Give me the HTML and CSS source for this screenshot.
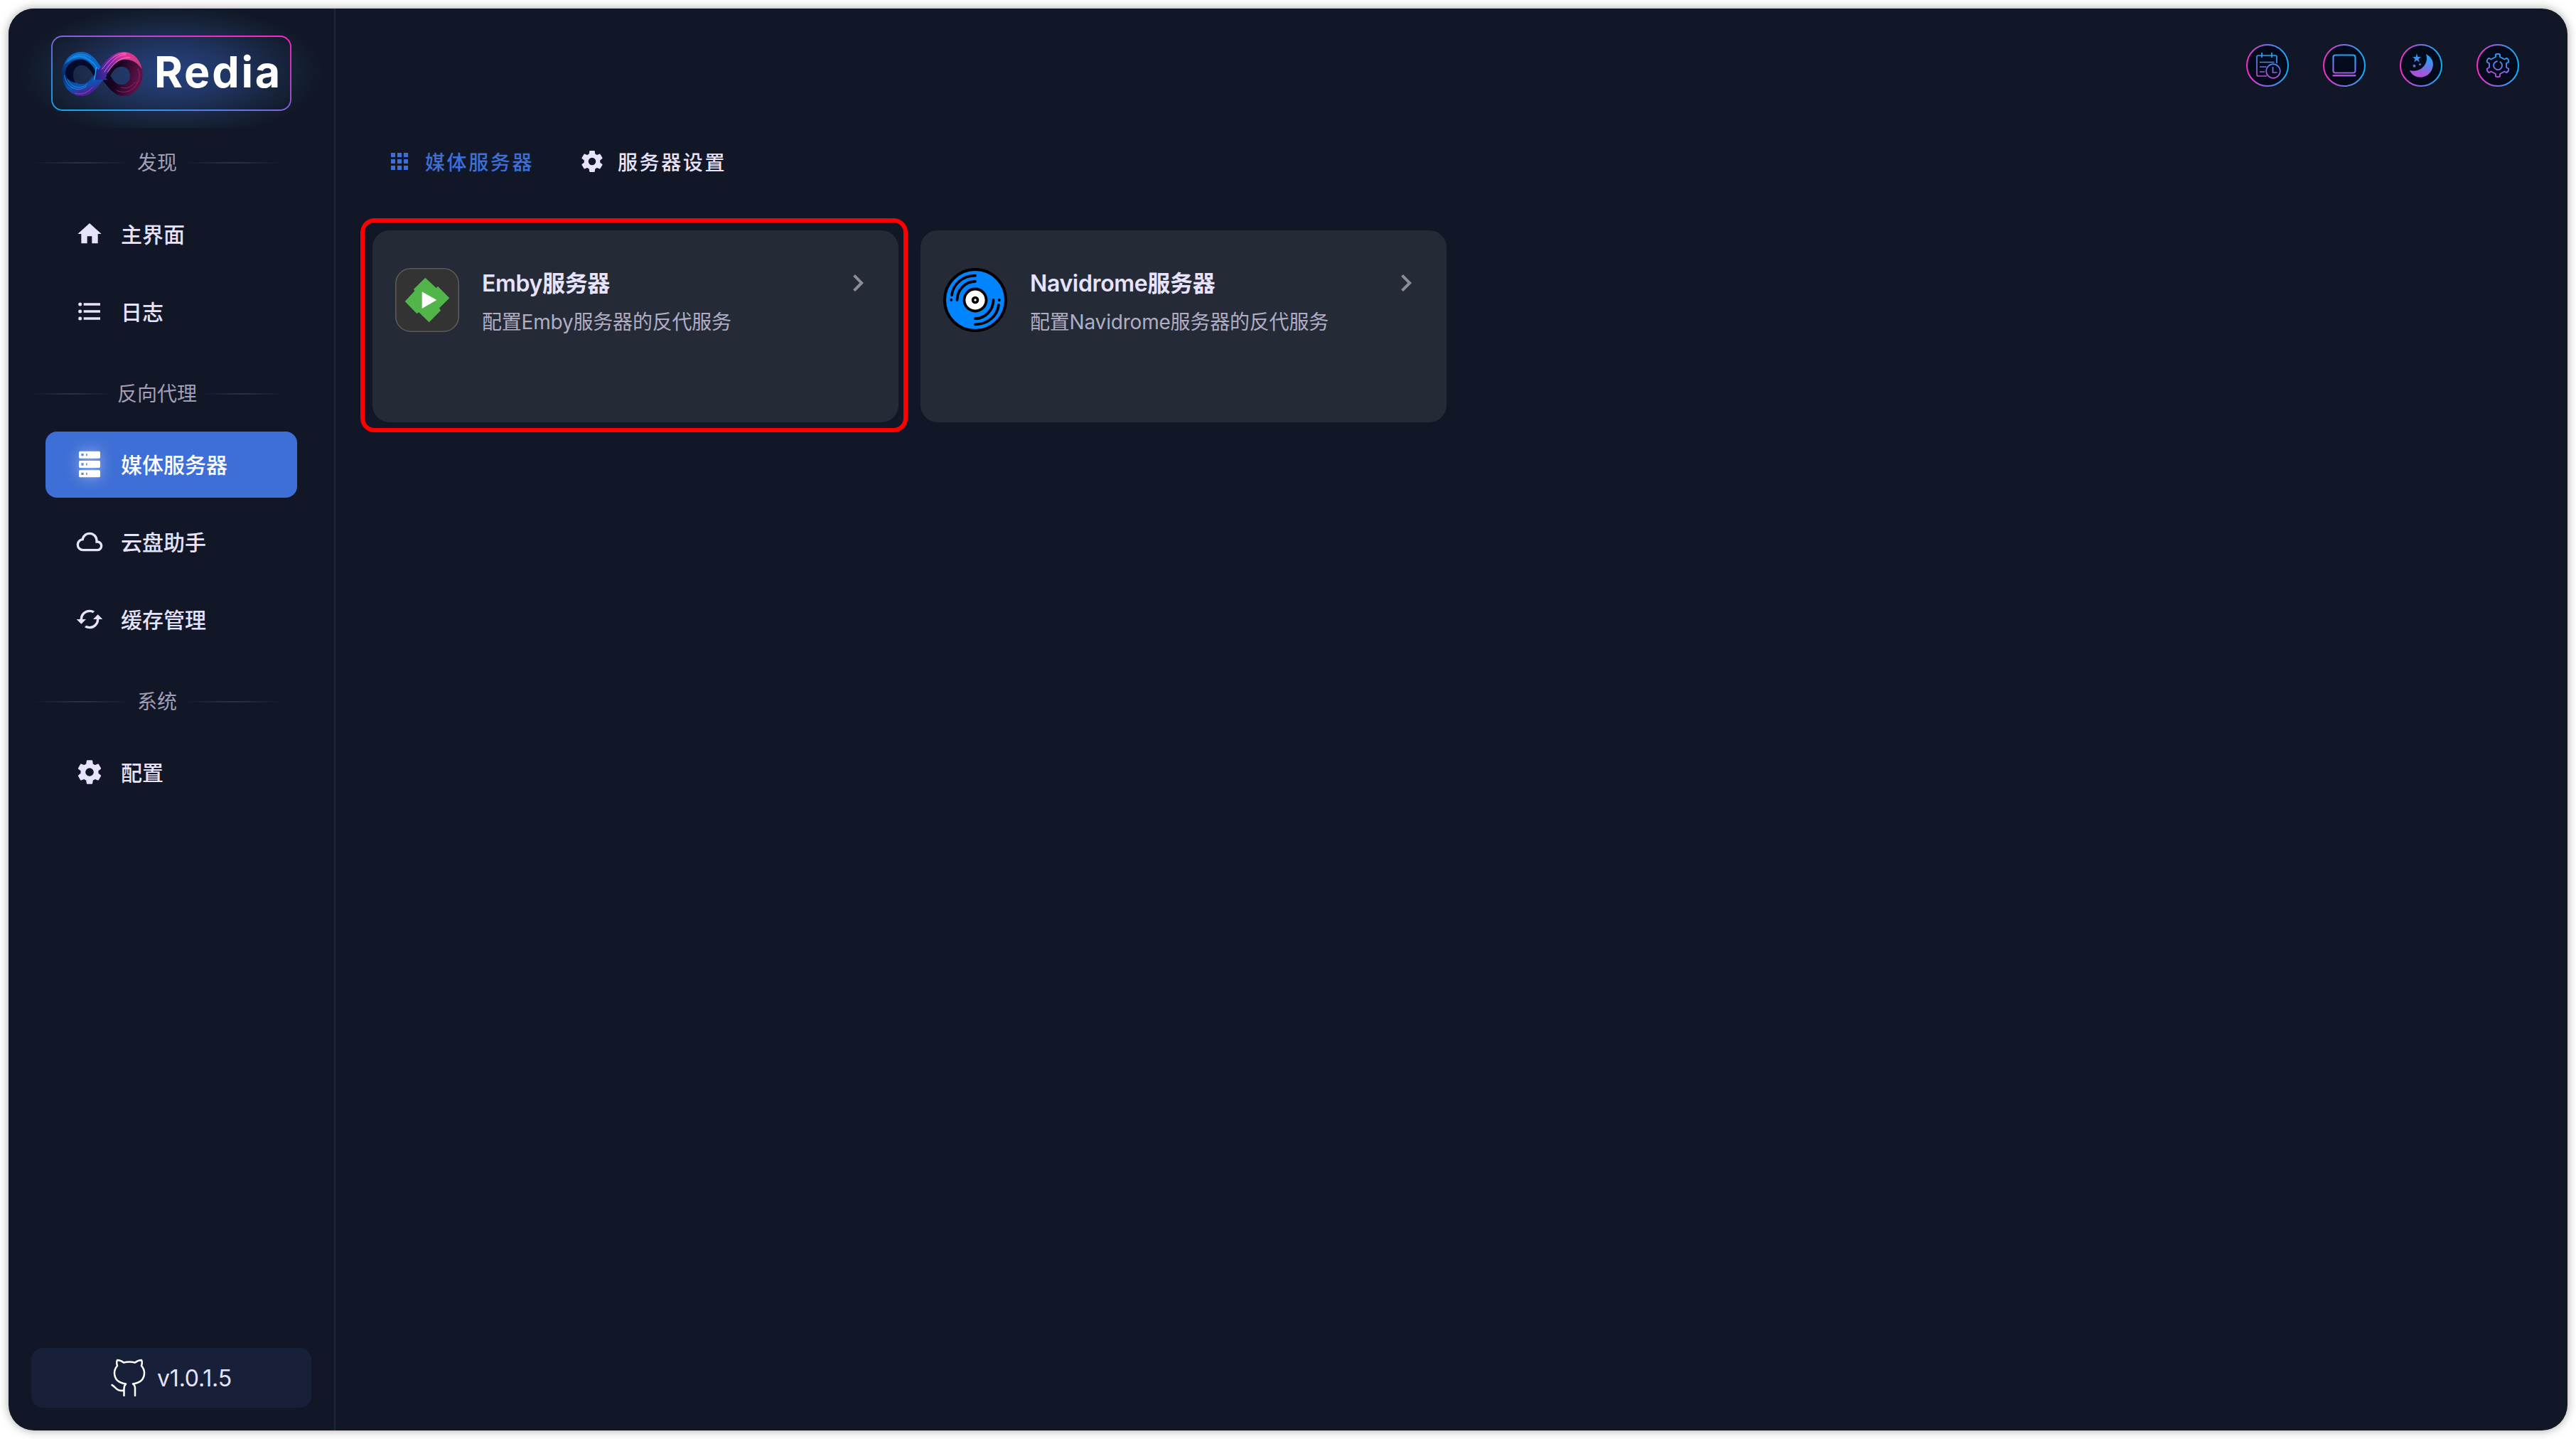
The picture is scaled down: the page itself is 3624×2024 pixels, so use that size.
FILE: index.html
```html
<!DOCTYPE html>
<html lang="zh-CN">
<head>
  <meta charset="UTF-8" />
  <meta name="viewport" content="width=device-width, initial-scale=1.0"/>
  <title>Redia</title>
  <link rel="stylesheet" href="styles.css">
</head>
<body>
  <!-- shared gradients and icons -->
  <svg class="defs" width="0" height="0">
    <defs>
      <linearGradient id="ring" x1="0" y1="0" x2="1" y2="0">
        <stop offset="0" stop-color="#ff2bc8"/>
        <stop offset="0.5" stop-color="#7f6fe6"/>
        <stop offset="1" stop-color="#0fb0fa"/>
      </linearGradient>
      <linearGradient id="glyph" gradientUnits="userSpaceOnUse" x1="32" y1="12" x2="24" y2="50">
        <stop offset="0" stop-color="#10aff8"/>
        <stop offset="0.5" stop-color="#6b74e6"/>
        <stop offset="1" stop-color="#d63ccf"/>
      </linearGradient>
      <linearGradient id="frame" x1="0" y1="1" x2="1" y2="0">
        <stop offset="0.1" stop-color="#18a5f0"/>
        <stop offset="0.5" stop-color="#7d66de"/>
        <stop offset="0.85" stop-color="#f72bc6"/>
      </linearGradient>
      <linearGradient id="loopBlue" x1="0" y1="0" x2="0.3" y2="1">
        <stop offset="0" stop-color="#0a5cb8"/>
        <stop offset="0.5" stop-color="#062a6c"/>
        <stop offset="0.8" stop-color="#0a56b4"/>
        <stop offset="1" stop-color="#4a2194"/>
      </linearGradient>
      <linearGradient id="loopPink" x1="0" y1="0.4" x2="1" y2="0.3">
        <stop offset="0" stop-color="#1a2a90"/>
        <stop offset="0.35" stop-color="#7c22a8"/>
        <stop offset="0.65" stop-color="#e8349a"/>
        <stop offset="1" stop-color="#c0407c"/>
      </linearGradient>
      <linearGradient id="loopDark" x1="0" y1="0" x2="1" y2="0.3">
        <stop offset="0" stop-color="#050a2c"/>
        <stop offset="0.5" stop-color="#16041f"/>
        <stop offset="1" stop-color="#5e1248"/>
      </linearGradient>
      <symbol id="icon-cog" viewBox="0 0 24 24">
        <path d="M12 15.5A3.5 3.5 0 0 1 8.5 12 3.5 3.5 0 0 1 12 8.500a3.500 3.500 0 0 1 3.500 3.500 3.500 3.500 0 0 1-3.500 3.500m7.430-2.530c.040-.320.070-.640.070-.970s-.030-.660-.070-1l2.110-1.630c.190-.150.240-.420.120-.640l-2-3.460c-.120-.220-.390-.310-.610-.220l-2.490 1c-.520-.390-1.060-.730-1.690-.980l-.370-2.650A.506.506 0 0 0 14 2h-4c-.250 0-.460.180-.500.420l-.370 2.650c-.630.250-1.170.590-1.690.980l-2.490-1c-.220-.090-.490 0-.610.220l-2 3.460c-.130.220-.070.490.120.640L4.570 11c-.040.340-.070.670-.070 1s.030.650.070.970l-2.110 1.660c-.190.150-.250.420-.120.640l2 3.460c.120.220.390.300.610.220l2.490-1.010c.520.400 1.060.740 1.690.990l.370 2.650c.040.240.250.420.500.420h4c.250 0 .460-.180.500-.420l.370-2.650c.630-.260 1.170-.590 1.690-.990l2.490 1.010c.220.080.490 0 .610-.220l2-3.460c.120-.220.070-.490-.120-.640z"/>
      </symbol>
      <symbol id="icon-chevron" viewBox="0 0 24 24">
        <path d="M8.590 16.580 13.170 12 8.590 7.410 10 6l6 6-6 6z"/>
      </symbol>
    </defs>
  </svg>

  <div class="window">
    <div class="sidebar">
      <div class="logo-area">
        <svg class="logo-frame" viewBox="0 0 338 106">
          <rect x="1" y="1" width="336" height="104" rx="15" fill="none" stroke="url(#frame)" stroke-width="1.800"/>
        </svg>
        <svg class="logo-mark" viewBox="0 0 116 68">
          <!-- dark right loop -->
          <path fill-rule="evenodd" fill="url(#loopDark)" d="M115 34C115 16 103 3 88 3 74 3 62 18 52 36 64 50 72 66 88 66c15 0 27-14 27-32zM97 37c0 8-5 13-12 13-8 0-12-6-16-13 4-8 8-13 16-13 7 0 12 5 12 13z"/>
          <!-- blue left loop with its shaded inside -->
          <path fill-rule="evenodd" fill="url(#loopBlue)" d="M0 34C0 16 12 3 28 3c14 0 24 14 36 34C52 50 44 66 28 66 12 66 0 52 0 34zM16 36c0 8 5 13 12 13 8 0 12-6 17-13-5-8-9-14-17-14-7 0-12 6-12 14z"/>
          <path d="M5 30C8 19 17 14 27 14c7 0 13 4 18 12l4 8-4 3c-5-9-10-15-17-15-8 0-13 7-12 15 0 5 2 8 4 10C10 46 4 40 5 30z" fill="#040a2a"/>
          <path d="M3 22C8 8 17 3 28 3c12 0 21 10 31 27l-6 8C43 20 36 13 25 13 15 13 8 17 3 22z" fill="#0a68c6"/>
          <!-- pink strand ending in the arrow head -->
          <path d="M46 43 49 25 52 29C60 17 73 3 88 3c14 0 24 11 26 25-6-10-15-15-26-14-11 2-17 10-27 25l4 4z" fill="url(#loopPink)"/>
          <path d="M60 32C72 15 80 7 91 7M65 32C75 17 83 11 97 11M57 28C70 11 78 5 92 5" fill="none" stroke="#ff8ec4" stroke-width="0.800"/>
          <path d="M8 17C16 6 30 3 41 12M12 14C20 8 32 7 48 22M16 11c12-5 22-2 36 17M3 36c3 18 19 26 32 16M8 42c6 13 18 15 28 7" fill="none" stroke="#2fa8f6" stroke-width="0.700"/>
          <path d="M18 62c10 3 18 0 26-9" fill="none" stroke="#b44ad0" stroke-width="0.800"/>
          <path d="M46 43 49 25" stroke="#35b4f8" stroke-width="1.200"/>
          <path d="M78 58c10 5 24 2 30-12M84 54c8 2 16-1 20-8M108 27c4 8 3 14-1 21" fill="none" stroke="#b32a72" stroke-width="0.700"/>
        </svg>
        <span class="logo-text">Redia</span>
      </div>

      <div class="section">发现</div>
      <a class="nav-item">
        <svg viewBox="0 0 24 24"><path d="M10 20v-6h4v6h5v-8h3L12 3 2 12h3v8z"/></svg>
        主界面
      </a>
      <a class="nav-item">
        <svg viewBox="0 0 24 24"><path d="M7 5h14v2H7zm0 8v-2h14v2zM4 4.500A1.500 1.500 0 1 1 4 7.500 1.500 1.500 0 0 1 4 4.500m0 6a1.500 1.500 0 1 1 0 3 1.500 1.500 0 0 1 0-3M7 19v-2h14v2zm-3-2.500a1.500 1.500 0 1 1 0 3 1.500 1.500 0 0 1 0-3"/></svg>
        日志
      </a>

      <div class="section">反向代理</div>
      <a class="nav-item active">
        <svg viewBox="0 0 24 24"><path fill-rule="evenodd" d="M4 1h16a1 1 0 0 1 1 1v4a1 1 0 0 1-1 1H4a1 1 0 0 1-1-1V2a1 1 0 0 1 1-1m0 8h16a1 1 0 0 1 1 1v4a1 1 0 0 1-1 1H4a1 1 0 0 1-1-1v-4a1 1 0 0 1 1-1m0 8h16a1 1 0 0 1 1 1v4a1 1 0 0 1-1 1H4a1 1 0 0 1-1-1v-4a1 1 0 0 1 1-1M9 5h1V3H9zm0 8h1v-2H9zm0 8h1v-2H9zM5 3v2h2V3zm0 8v2h2v-2zm0 8v2h2v-2z"/></svg>
        媒体服务器
      </a>
      <a class="nav-item">
        <svg viewBox="0 0 24 24"><path d="M6.500 20Q4.220 20 2.610 18.430 1 16.850 1 14.580 1 12.630 2.170 11.100 3.350 9.570 5.250 9.150 5.880 6.850 7.750 5.430 9.630 4 12 4 14.930 4 16.960 6.040 19 8.070 19 11 20.730 11.200 21.860 12.500 23 13.780 23 15.500 23 17.380 21.690 18.690 20.380 20 18.500 20M6.500 18H18.500Q19.550 18 20.270 17.270 21 16.550 21 15.500 21 14.450 20.270 13.730 19.550 13 18.500 13H17V11Q17 8.930 15.540 7.460 14.080 6 12 6 9.930 6 8.460 7.460 7 8.930 7 11H6.500Q5.050 11 4.030 12.030 3 13.050 3 14.500 3 15.950 4.030 17 5.050 18 6.500 18"/></svg>
        云盘助手
      </a>
      <a class="nav-item">
        <svg viewBox="0 0 24 24"><path d="m19 8-4 4h3a6 6 0 0 1-6 6c-1 0-1.970-.250-2.800-.700l-1.460 1.460A7.930 7.930 0 0 0 12 20a8 8 0 0 0 8-8h3M6 12a6 6 0 0 1 6-6c1 0 1.970.250 2.800.700l1.460-1.460A7.930 7.930 0 0 0 12 4a8 8 0 0 0-8 8H1l4 4 4-4"/></svg>
        缓存管理
      </a>

      <div class="section">系统</div>
      <a class="nav-item">
        <svg><use href="#icon-cog"/></svg>
        配置
      </a>

      <div class="version">
        <svg viewBox="0 0 50 54">
          <path d="M18.500 52V42c0-3 1-5 2.500-6.500C10 34 5 28.500 5 20c0-4 1.500-7 4-10C8 7 8 4 9 2c4 0 7 2 9 3.500 5-1.300 11-1.300 16 0C36 4 39 2 43 2c1 2 1 5 0 8 2.500 3 4 6 4 10 0 8.500-5 14-16 15.500 2.500 1.500 3 4.500 3 6.500v10M18.500 44.500C8 47 7 39.500 1.500 37"/>
        </svg>
        v1.0.1.5
      </div>
    </div>

    <div class="main">
      <div class="toolbar">
        <svg class="tool" viewBox="0 0 60 60">
          <circle cx="30" cy="30" r="29" stroke="url(#ring)"/>
          <g fill="none" stroke="url(#glyph)" stroke-width="1.700">
            <path d="M29 45H17a2 2 0 0 1-2-2V18a2 2 0 0 1 2-2h24a2 2 0 0 1 2 2v9M22 12v7M36 12v7M19 25.500h20.500M19 32h9.500M19 39h7"/>
            <circle cx="38" cy="38" r="9.800"/>
            <path d="M37.500 32v8h6"/>
          </g>
        </svg>
        <svg class="tool" viewBox="0 0 60 60">
          <circle cx="30" cy="30" r="29" stroke="url(#ring)"/>
          <rect x="14.500" y="15.500" width="31" height="25" rx="3" fill="none" stroke="url(#glyph)" stroke-width="2.200"/>
          <rect x="13.500" y="43" width="33" height="2.500" rx="1" fill="url(#glyph)"/>
        </svg>
        <svg class="tool" viewBox="0 0 60 60">
          <circle cx="30" cy="30" r="29" stroke="url(#ring)"/>
          <g fill="url(#glyph)">
            <path d="M37 14C45 18 49 26 46 34 43 43 35 47.500 27 46.500 21 46 16 42 14 37c8 2 15 0 20-6 4-5 5-11 3-17z"/>
            <path d="m24 13.500 1.500 4.500 4.500.2-3.600 2.800 1.400 4.500-3.800-2.700-3.800 2.700 1.400-4.500-3.600-2.800 4.500-.2zM20.500 28l.8 1.700 1.900.1-1.300 1.300.5 1.900-1.800-1-1.700 1 .3-1.900-1.400-1.300 1.900-.2zM28.500 26.500l.6 1.300 1.400.1-1 1 .3 1.400-1.300-.7-1.300.7.300-1.400-1-1 1.400-.1z"/>
          </g>
        </svg>
        <svg class="tool" viewBox="0 0 60 60">
          <circle cx="30" cy="30" r="29" stroke="url(#ring)"/>
          <g fill="none" stroke="url(#glyph)" stroke-width="1.900" stroke-linejoin="round" stroke-linecap="round">
            <path d="M27 14.500q3-1.500 6 0V18l6.500 3.500 2.800-1.700q3.200 1.500 3 5.300L42 27.200v5.600l3.300 2q.2 3.800-3 5.400l-2.800-1.700L33 42v3.500q-3 1.500-6 0V42l-6.500-3.500-2.800 1.700q-3.200-1.600-3-5.400l3.300-2v-5.600l-3.300-2.100q-.2-3.800 3-5.300l2.800 1.700L27 18z"/>
            <path d="M33.500 25.200A6 6 0 1 1 28.800 24.200"/>
          </g>
        </svg>
      </div>

      <div class="tabs">
        <a class="tab active">
          <svg viewBox="0 0 24 24"><path d="M16 20h4v-4h-4m0-2h4v-4h-4m-6-2h4V4h-4m6 4h4V4h-4m-6 10h4v-4h-4m-6 4h4v-4H4m0 10h4v-4H4m6 4h4v-4h-4M4 8h4V4H4z"/></svg>
          媒体服务器
        </a>
        <a class="tab">
          <svg><use href="#icon-cog"/></svg>
          服务器设置
        </a>
      </div>

      <div class="cards">
        <div class="card selected">
          <svg class="card-icon" viewBox="0 0 90 90">
            <rect x="0.800" y="0.800" width="88.400" height="88.400" rx="21" fill="#333" stroke="#5a5a5a" stroke-width="1.600"/>
            <path d="M42.300 13.700 57.700 28l2.300-2.300 16.300 16.600L62 56.300l2 3.400-16.300 16.600-14.400-14-3 1.700L13.700 47l13.600-14.700-1.300-2.600z" fill="#52b54b"/>
            <path d="M37.700 33.300V57l20.600-12z" fill="#fff"/>
          </svg>
          <div class="card-text">
            <h3>Emby服务器</h3>
            <p>配置Emby服务器的反代服务</p>
          </div>
          <svg class="chevron"><use href="#icon-chevron"/></svg>
        </div>
        <div class="card">
          <svg class="card-icon" viewBox="0 0 90 90">
            <circle cx="45" cy="45" r="43" fill="#0084ff" stroke="#000" stroke-width="4"/>
            <circle cx="45" cy="45" r="15.500" fill="#fff" stroke="#000" stroke-width="3.800"/>
            <circle cx="45" cy="45" r="3.500" fill="#fff" stroke="#000" stroke-width="3.600"/>
            <g fill="none" stroke="#000" stroke-width="3.800" stroke-linecap="round">
              <path d="M45 10.700C28 10.700 14 22 12 38M45 18.800C31 18.800 19.500 31 19.500 45M11.200 44.700v.3M45 79.300C62 79.300 76 68 78 52M45 71.200C59 71.200 70.500 59 70.500 45M78.800 45v.3"/>
            </g>
          </svg>
          <div class="card-text">
            <h3>Navidrome服务器</h3>
            <p>配置Navidrome服务器的反代服务</p>
          </div>
          <svg class="chevron"><use href="#icon-chevron"/></svg>
        </div>
      </div>
    </div>
  </div>
</body>
</html>
```
FILE: styles.css
```css
* {
  box-sizing: border-box;
}

body {
  margin: 0;
  padding: 12px;
  background-color: #fff;
  color: #e7e3fc;
  font-family: Inter, 'Noto Sans CJK SC', sans-serif;
}

.defs {
  position: absolute;
}

.window {
  display: flex;
  width: 3600px;
  height: 2000px;
  background-color: #111726;
  border-radius: 36px;
  overflow: hidden;
  box-shadow: 0 0 14px rgba(0, 0, 0, 0.35);
}

.sidebar {
  width: 460px;
  border-right: 2px solid #1f2636;
  display: flex;
  flex-direction: column;
}

/* logo */
.logo-area {
  position: relative;
  height: 168px;
  flex-shrink: 0;
  padding: 14px 0 0 75px;
  display: flex;
  align-items: center;
  background: radial-gradient(ellipse 215px 96px at 229px 89px, #26427f 0%, #203562 38%, #18253f 70%, #131d2e 88%, #111726 100%);
}

.logo-frame {
  position: absolute;
  left: 60px;
  top: 38px;
  width: 338px;
  height: 106px;
}

.logo-mark {
  width: 115px;
  height: 67px;
  flex-shrink: 0;
}

.logo-text {
  margin: -4px 0 0 15px;
  font-weight: 700;
  font-size: 61px;
  line-height: 66px;
  letter-spacing: 2.8px;
  color: #fff;
}

/* menu */
.section {
  display: flex;
  align-items: center;
  gap: 8px;
  height: 40px;
  margin: 29px 73px 34px 33px;
  font-size: 28px;
  line-height: 40px;
  color: #a29fb6;
}

.nav-item + .section {
  margin-top: 33px;
  margin-bottom: 33px;
}

.section::before,
.section::after {
  content: "";
  flex: 1;
  height: 2px;
  background: linear-gradient(to right, transparent, #2b3242, transparent);
}

.nav-item {
  display: flex;
  align-items: center;
  height: 93px;
  margin: 0 52px 16px 52px;
  padding: 0 0 4px 42px;
  gap: 24px;
  border-radius: 16px;
  font-size: 30px;
  font-weight: 500;
}

.nav-item svg {
  width: 40px;
  height: 40px;
  margin-top: 3px;
  fill: #e7e3fc;
}

.nav-item.active {
  background-color: #3e6fd6;
  color: #fff;
}

.nav-item.active svg {
  fill: #fff;
  filter: drop-shadow(0 0 10px rgba(255, 255, 255, 0.5));
}

.version {
  display: flex;
  align-items: center;
  justify-content: center;
  gap: 15px;
  height: 84px;
  margin: auto 32px 32px 32px;
  border-radius: 16px;
  background-color: #172038;
  font-size: 32px;
  letter-spacing: -0.2px;
}

.version svg {
  width: 50px;
  height: 54px;
  fill: none;
  stroke: #fff;
  stroke-width: 2.5;
  stroke-linecap: round;
  stroke-linejoin: round;
}

/* content */
.main {
  flex: 1;
}

.toolbar {
  display: flex;
  justify-content: flex-end;
  gap: 48px;
  padding: 50px 68px 0 0;
}

.tool {
  width: 60px;
  height: 60px;
}

.tool > circle {
  fill: #030a1b;
  stroke-width: 2;
}

.tabs {
  display: flex;
  gap: 64px;
  height: 60px;
  margin: 75px 0 67px 72px;
}

.tab {
  display: flex;
  align-items: center;
  gap: 18px;
  padding-bottom: 1px;
  font-size: 28px;
  font-weight: 500;
  letter-spacing: 2.6px;
}

.tab svg {
  width: 36px;
  height: 36px;
  fill: #e7e3fc;
}

.tab.active {
  color: #3e6fd6;
}

.tab.active svg {
  fill: #3e6fd6;
}

.cards {
  display: flex;
  gap: 31px;
  padding-left: 52px;
}

.card {
  display: flex;
  align-items: flex-start;
  width: 740px;
  height: 270px;
  padding: 53px 33px 0 32px;
  border-radius: 24px;
  background-color: #252a37;
}

.card.selected {
  position: relative;
}

/* highlight frame around the card */
.card.selected::after {
  content: "";
  position: absolute;
  inset: -17px -13px -14px -17px;
  border: 6px solid #f00;
  border-radius: 20px;
}

.card-icon {
  width: 90px;
  height: 90px;
  flex-shrink: 0;
}

.card-text {
  flex: 1;
  padding-left: 32px;
}

.card h3 {
  margin: 0;
  font-size: 32px;
  line-height: 44px;
  font-weight: 600;
  letter-spacing: -0.35px;
}

.card p {
  margin: 12px 0 0;
  font-size: 28px;
  line-height: 40px;
  letter-spacing: -0.2px;
  color: #b0adc4;
}

.chevron {
  width: 48px;
  height: 48px;
  margin-top: -3px;
  fill: #8d8b9d;
}
```
